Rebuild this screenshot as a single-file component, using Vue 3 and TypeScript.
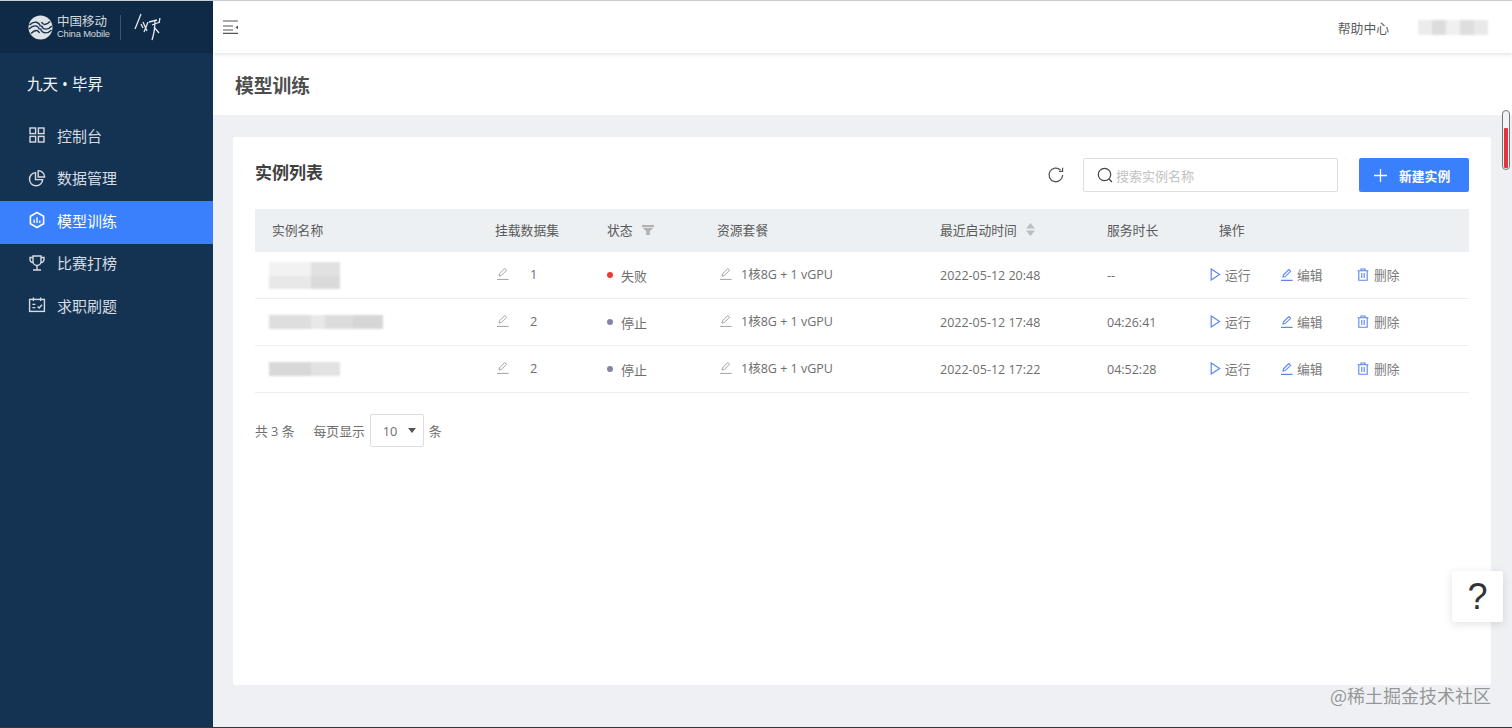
<script setup lang="ts">
interface MenuItem {
  label: string
  icon: 'grid' | 'pie' | 'hex' | 'cup' | 'cal'
  active?: boolean
}

interface Row {
  mount: number
  status: string
  failed: boolean
  started: string
  duration: string
  blur: string
}

const menu: MenuItem[] = [
  { label: '控制台', icon: 'grid' },
  { label: '数据管理', icon: 'pie' },
  { label: '模型训练', icon: 'hex', active: true },
  { label: '比赛打榜', icon: 'cup' },
  { label: '求职刷题', icon: 'cal' },
]

const rows: Row[] = [
  { mount: 1, status: '失败', failed: true, started: '2022-05-12 20:48', duration: '--', blur: 'blur-a' },
  { mount: 2, status: '停止', failed: false, started: '2022-05-12 17:48', duration: '04:26:41', blur: 'blur-b' },
  { mount: 2, status: '停止', failed: false, started: '2022-05-12 17:22', duration: '04:52:28', blur: 'blur-c' },
]
</script>

<template>
  <div class="page">
    <aside class="sidebar">
      <div class="brand">
        <svg class="brand-mark" width="25" height="25" viewBox="0 0 25 25" fill="none">
          <circle cx="12.5" cy="12.5" r="12" fill="#dfe3e7" />
          <path d="M1.5 10C6 5.5 11 6.5 12.5 11.5M1 14C5.5 9.5 10 10 11.5 14.5M3 18.5C7 14.5 10 14.5 11.5 18" stroke="#17324f" stroke-width="1.4" />
          <path d="M23.5 15C19 19.5 14 18.5 12.5 13.5M24 11C19.5 15.5 15 15 13.5 10.5M22 6.5C18 10.5 15 10.5 13.5 7" stroke="#17324f" stroke-width="1.4" />
        </svg>
        <div class="brand-text">
          <span class="brand-cn">中国移动</span>
          <span class="brand-en">China Mobile</span>
        </div>
        <i class="brand-line" />
        <svg class="brand-sign" width="27" height="28" viewBox="0 0 27 28" fill="none" stroke="#e6e9ed" stroke-width="1.3">
          <path d="M1 16L7 1M7 11L9 15M9 9L13 18M14 9L10 19M15 9L23 7M18 12L26 9M21 7C21 15 20 21 18 27M20 14L25 20M26 5L25 10" />
        </svg>
      </div>
      <div class="product">九天 • 毕昇</div>
      <nav class="menu">
        <a v-for="item in menu" :key="item.label" class="menu-item" :class="{ active: item.active }">
          <svg width="18" height="18" viewBox="0 0 18 18" fill="none" stroke="currentColor" stroke-width="1.4">
            <template v-if="item.icon === 'grid'">
              <rect x="2" y="2" width="5.6" height="5.6" />
              <rect x="10.4" y="2" width="5.6" height="5.6" />
              <rect x="2" y="10.4" width="5.6" height="5.6" />
              <rect x="10.4" y="10.4" width="5.6" height="5.6" />
            </template>
            <template v-else-if="item.icon === 'pie'">
              <path d="M7.5 3.6A6.6 6.6 0 1 0 14.7 10.6H7.5Z" />
              <path d="M10.2 1.6A6.4 6.4 0 0 1 16.6 8H10.2Z" />
            </template>
            <template v-else-if="item.icon === 'hex'">
              <path d="M9 1.5L15.6 5.2V12.8L9 16.5L2.4 12.8V5.2Z" stroke-width="1.6" />
              <path d="M6.2 8.6V12M9 6.2V12M11.8 9.4V12" stroke-width="1.3" />
            </template>
            <template v-else-if="item.icon === 'cup'">
              <path d="M5 2H13V7.5A4 4 0 0 1 5 7.5Z" />
              <path d="M5 3.5H2V5.5A3 3 0 0 0 5.2 8.5M13 3.5H16V5.5A3 3 0 0 1 12.8 8.5M9 11.5V15.5M5 16H13" />
            </template>
            <template v-else>
              <rect x="1.6" y="3.4" width="14.8" height="12" />
              <path d="M5.4 1.6V5M12.6 1.6V5M4.4 8.4H7.4M4.4 11.6H7.4M9.6 10.4L11.2 12L14 8.8" />
            </template>
          </svg>
          <span>{{ item.label }}</span>
        </a>
      </nav>
    </aside>

    <main class="main">
      <header class="topbar">
        <svg width="16" height="14" viewBox="0 0 16 14" fill="none" stroke="#555" stroke-width="1.1">
          <path d="M0 1H15M0 6H10M0 10H10M0 13.4H15" />
          <path d="M15 5.4V9.2L12.4 7.3Z" fill="#555" stroke="none" />
        </svg>
        <div class="topbar-right">
          <span class="help">帮助中心</span>
          <div class="user-blur" />
        </div>
      </header>

      <section class="title-bar">模型训练</section>

      <div class="content">
        <div class="card">
          <div class="card-head">
            <h2>实例列表</h2>
            <div class="tools">
              <svg class="refresh" width="18" height="18" viewBox="0 0 18 18" fill="none" stroke="#555" stroke-width="1.3">
                <path d="M15.6 9A6.8 6.8 0 1 1 13.6 4.1" />
                <path d="M15.6 1.8V5.4H12" stroke-width="1.2" />
              </svg>
              <label class="search">
                <svg width="16" height="16" viewBox="0 0 16 16" fill="none" stroke="#444" stroke-width="1.2">
                  <circle cx="7.5" cy="7.5" r="6.2" />
                  <path d="M12 12L15 15" />
                </svg>
                <span>搜索实例名称</span>
              </label>
              <button class="primary" type="button">
                <svg width="13" height="13" viewBox="0 0 13 13" stroke="#fff" stroke-width="1.3">
                  <path d="M6.5 0V13M0 6.5H13" />
                </svg>
                <span>新建实例</span>
              </button>
            </div>
          </div>

          <div class="grid grid-head">
            <div class="cell-name">实例名称</div>
            <div>挂载数据集</div>
            <div class="with-icon">
              状态
              <svg class="filter" width="12" height="10" viewBox="0 0 12 10" fill="#b0b2b4"><path d="M0 0H12V2.2H0ZM1 3H11L7.8 6.4V10H4.2V6.4Z" /></svg>
            </div>
            <div>资源套餐</div>
            <div class="with-icon">
              最近启动时间
              <svg width="9" height="13" viewBox="0 0 9 13" fill="#bcbfc2"><path d="M4.5 0L9 5.4H0ZM0 7.6H9L4.5 13Z" /></svg>
            </div>
            <div>服务时长</div>
            <div class="cell-op-head">操作</div>
          </div>

          <div v-for="row in rows" :key="row.started" class="grid grid-row">
            <div class="name-blur" :class="row.blur" />
            <div class="mount">
              <svg class="pencil" width="13" height="13" viewBox="0 0 13 13" fill="none" stroke="#a3a3a3" stroke-width="1">
                <path d="M3 9L3.5 6.8L8.8 1.5L10.6 3.3L5.2 8.6ZM1 12.4H12.6" />
              </svg>
              <span>{{ row.mount }}</span>
            </div>
            <div class="status">
              <i class="dot" :class="{ failed: row.failed }" />
              {{ row.status }}
            </div>
            <div class="resource">
              <svg class="pencil" width="13" height="13" viewBox="0 0 13 13" fill="none" stroke="#a3a3a3" stroke-width="1">
                <path d="M3 9L3.5 6.8L8.8 1.5L10.6 3.3L5.2 8.6ZM1 12.4H12.6" />
              </svg>
              <span>1核8G + 1 vGPU</span>
            </div>
            <div class="num">{{ row.started }}</div>
            <div class="num">{{ row.duration }}</div>
            <div class="actions">
              <a class="act act-run">
                <svg width="11" height="13" viewBox="0 0 11 13" fill="none" stroke="#5b87ee" stroke-width="1.2"><path d="M1.2 1L9.6 6.5L1.2 12Z" /></svg>
                运行
              </a>
              <a class="act act-edit">
                <svg width="13" height="13" viewBox="0 0 13 13" fill="none" stroke="#5b87ee" stroke-width="1.1"><path d="M3 9L3.5 6.8L8.8 1.5L10.6 3.3L5.2 8.6ZM1 12.4H12.6" /></svg>
                编辑
              </a>
              <a class="act act-del">
                <svg width="12" height="13" viewBox="0 0 12 13" fill="none" stroke="#5b87ee" stroke-width="1.1"><path d="M0.6 2.8H11.4M4 2.8V1H8V2.8M1.8 2.8V12.2H10.2V2.8M4.8 5V10M7.2 5V10" /></svg>
                删除
              </a>
            </div>
          </div>

          <div class="pager">
            <span>共 3 条</span>
            <span class="per-page">每页显示</span>
            <div class="select">
              <span>10</span>
              <i class="caret" />
            </div>
            <span>条</span>
          </div>
        </div>
      </div>
    </main>

    <div class="scroll-thumb"><i /></div>
    <button class="float-help" type="button">?</button>
    <div class="watermark">@稀土掘金技术社区</div>
  </div>
</template>

<style>
html,
body {
  margin: 0;
  overflow: hidden;
}
</style>

<style scoped>
.page {
  position: relative;
  display: flex;
  height: 728px;
  box-sizing: border-box;
  border-top: 1px solid #c9ccd0;
  border-bottom: 1px solid #33383d;
  overflow: hidden;
  font-family: "Open Sans", "Noto Sans CJK SC", sans-serif;
  font-size: 12.8px;
  color: #6e6e6e;
}

/* Sidebar */
.sidebar {
  flex: 0 0 213px;
  background: #143352;
  color: #d5dbe1;
}

.brand {
  display: flex;
  align-items: center;
  height: 52px;
  padding-left: 28px;
  box-sizing: border-box;
  background: #0f2a47;
}

.brand-mark {
  flex: none;
}

.brand-text {
  display: flex;
  flex-direction: column;
  margin-left: 4px;
  width: 52px;
  color: #d4d9de;
  white-space: nowrap;
}

.brand-cn {
  font-size: 12.5px;
  line-height: 14px;
}

.brand-en {
  font-family: "Liberation Sans", sans-serif;
  font-size: 9.4px;
  line-height: 10px;
  letter-spacing: -0.15px;
}

.brand-line {
  width: 1px;
  height: 25px;
  margin-left: 11px;
  background: #3d5570;
}

.brand-sign {
  margin-left: 13px;
}

.product {
  padding: 20px 0 0 27px;
  height: 39px;
  font-size: 15.5px;
  line-height: 22px;
  color: #f1f3f5;
}

.menu {
  display: flex;
  flex-direction: column;
  margin-top: 4px;
}

.menu-item {
  display: flex;
  align-items: center;
  gap: 11px;
  height: 42.5px;
  box-sizing: border-box;
  padding: 0 0 4px 28px;
  font-size: 15px;
}

.menu-item.active {
  background: #3a7ffb;
  color: #fff;
}

/* Main */
.main {
  flex: 1;
  min-width: 0;
  display: flex;
  flex-direction: column;
  background: #eef0f3;
}

.topbar {
  position: relative;
  z-index: 1;
  display: flex;
  align-items: center;
  justify-content: space-between;
  flex: 0 0 52px;
  padding: 0 24px 0 10px;
  background: #fff;
  box-shadow: 0 1px 4px rgba(0, 0, 0, 0.14);
}

.topbar-right {
  display: flex;
  align-items: center;
  gap: 29px;
}

.help {
  font-size: 12.8px;
  color: #5c5c5c;
}

.user-blur {
  width: 70px;
  height: 15px;
  background: linear-gradient(90deg, #ececec 0 14px, #dcdcdc 14px 28px, #f0f0f0 28px 42px, #dedede 42px 56px, #e9e9e9 56px);
  filter: blur(1px);
}

.title-bar {
  display: flex;
  align-items: center;
  flex: 0 0 62px;
  box-sizing: border-box;
  padding: 2px 0 0 22px;
  background: #fff;
  font-size: 18.8px;
  font-weight: 700;
  color: #4e4e4e;
}

.content {
  padding: 22px 21px 0 20px;
}

.card {
  height: 548px;
  padding: 0 22px;
  box-sizing: border-box;
  background: #fff;
  border-radius: 2px;
}

.card-head {
  display: flex;
  align-items: center;
  justify-content: space-between;
  height: 72px;
}

.card-head h2 {
  margin: 0 0 3px;
  font-size: 17px;
  font-weight: 700;
  color: #3f3f3f;
}

.tools {
  display: flex;
  align-items: center;
  margin-top: 4px;
}

.refresh {
  margin-right: 18px;
}

.search {
  display: flex;
  align-items: center;
  gap: 3px;
  width: 255px;
  height: 34px;
  padding-left: 13px;
  box-sizing: border-box;
  border: 1px solid #dcdee0;
  border-radius: 2px;
  font-size: 13px;
  color: #c2c2c2;
}

.primary {
  display: flex;
  align-items: center;
  gap: 12px;
  width: 110px;
  height: 34px;
  margin-left: 21px;
  padding: 0 0 0 15px;
  border: 0;
  border-radius: 2px;
  background: #3a7ffb;
  color: #fff;
  font: 700 12.8px "Open Sans", "Noto Sans CJK SC", sans-serif;
}

/* Table */
.grid {
  display: grid;
  grid-template-columns: 240px 112px 110px 223px 167px 103px 1fr;
  align-items: center;
}

.grid-head {
  height: 43px;
  padding-bottom: 2px;
  box-sizing: border-box;
  background: #edf0f2;
  color: #5a5a5a;
  font-size: 12.8px;
}

.cell-name {
  padding-left: 17px;
}

.cell-op-head {
  padding-left: 9px;
}

.with-icon {
  display: flex;
  align-items: center;
  gap: 9px;
}

.filter {
  margin-top: 1px;
}

.grid-row {
  height: 47px;
  border-bottom: 1px solid #eceef0;
  box-sizing: border-box;
}

.name-blur {
  margin-left: 14px;
  filter: blur(0.8px);
}

.blur-a {
  width: 71px;
  height: 27px;
  background:
    linear-gradient(90deg, #f2f2f2 0 42px, #e1e1e1 42px) top / 100% 14px no-repeat,
    linear-gradient(90deg, #e8e8e8 0 42px, #dadada 42px) bottom / 100% 14px no-repeat;
}

.blur-b {
  width: 114px;
  height: 14px;
  background: linear-gradient(90deg, #dedede 0 42px, #e8e8e8 42px 56px, #dcdcdc 56px 84px, #d6d6d6 84px);
}

.blur-c {
  width: 71px;
  height: 14px;
  background: linear-gradient(90deg, #d8d8d8 0 42px, #e2e2e2 42px);
}

.mount {
  display: flex;
  align-items: center;
  gap: 21px;
  padding-left: 1px;
  margin-top: -3px;
}

.pencil {
  flex: none;
}

.status {
  display: flex;
  align-items: center;
  gap: 8px;
  font-size: 13px;
}

.dot {
  width: 6px;
  height: 6px;
  border-radius: 50%;
  background: #8485a3;
}

.dot.failed {
  background: #ee3a32;
}

.resource {
  display: flex;
  align-items: center;
  gap: 9px;
  padding-left: 2px;
  margin-top: -3px;
  font-size: 12.5px;
}

.num {
  font-size: 12.5px;
  white-space: nowrap;
}

.actions {
  display: grid;
  grid-template-columns: 70px 77px auto;
  margin-top: -2px;
}

.act {
  display: flex;
  align-items: center;
  color: #7a7a7a;
}

.act-run {
  gap: 4px;
}

.act-edit {
  gap: 4px;
}

.act-del {
  gap: 5px;
}

.pager {
  display: flex;
  align-items: center;
  margin-top: 21px;
  color: #6e6e6e;
}

.per-page {
  margin-left: 19px;
}

.select {
  display: flex;
  align-items: center;
  justify-content: space-between;
  width: 54px;
  height: 33px;
  margin: 0 5px;
  padding: 0 7px 0 12px;
  box-sizing: border-box;
  border: 1px solid #dcdee0;
  border-radius: 2px;
}

.caret {
  width: 0;
  height: 0;
  border-left: 4.5px solid transparent;
  border-right: 4.5px solid transparent;
  border-top: 5px solid #555;
}

/* Overlays */
.scroll-thumb {
  position: absolute;
  top: 109px;
  left: 1502px;
  width: 8px;
  height: 60px;
  box-sizing: border-box;
  padding: 17px 1px 1px;
  border: 1px solid #777;
  border-radius: 4px;
  background: #f2f3f5;
}

.scroll-thumb i {
  display: block;
  height: 100%;
  border-radius: 1px;
  background: #e5333d;
}

.float-help {
  position: absolute;
  top: 570px;
  left: 1452px;
  width: 51px;
  height: 51px;
  padding: 0;
  border: 0;
  border-radius: 2px;
  background: #fff;
  box-shadow: 0 2px 8px rgba(0, 0, 0, 0.12);
  color: #333;
  font: 36px "Liberation Sans", sans-serif;
}

.watermark {
  position: absolute;
  top: 681px;
  right: 21px;
  font-family: "Noto Sans CJK SC", sans-serif;
  font-size: 18px;
  line-height: 26px;
  color: rgba(90, 90, 90, 0.62);
  white-space: nowrap;
}
</style>
